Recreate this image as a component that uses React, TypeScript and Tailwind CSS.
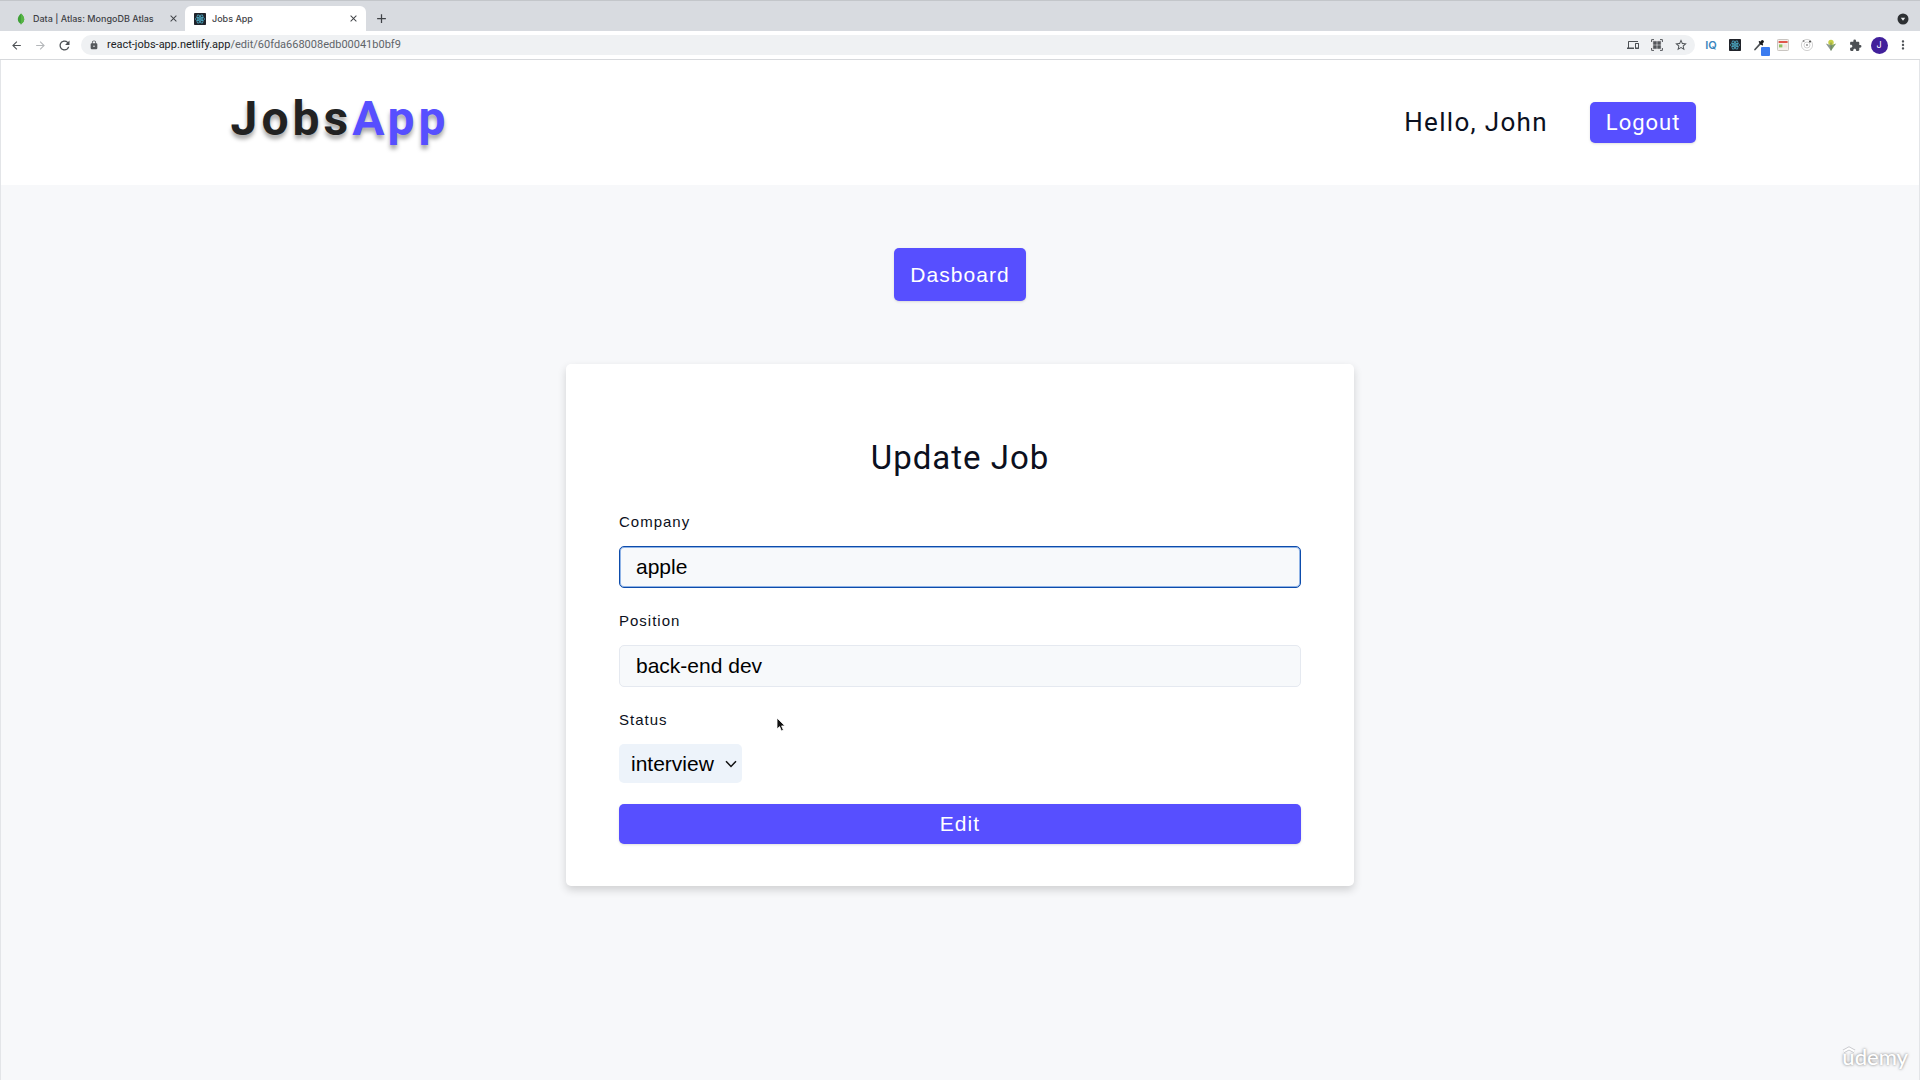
import { useState } from "react";
import {
  MdAdd,
  MdArrowBack,
  MdArrowForward,
  MdClose,
  MdExtension,
  MdLock,
  MdMoreVert,
  MdOutlineDevices,
  MdRefresh,
  MdStarBorder,
} from "react-icons/md";

const toolCell = "flex w-6 h-6 items-center justify-center";

function ReactBadge() {
  return (
    <svg viewBox="0 0 24 24" className="size-3 shrink-0" aria-hidden="true">
      <rect width="24" height="24" rx="1.5" fill="#20232a" />
      <g fill="none" stroke="#4fb3cf" strokeWidth="1.4">
        <ellipse cx="12" cy="12" rx="9.5" ry="3.7" />
        <ellipse cx="12" cy="12" rx="9.5" ry="3.7" transform="rotate(60 12 12)" />
        <ellipse cx="12" cy="12" rx="9.5" ry="3.7" transform="rotate(120 12 12)" />
      </g>
      <circle cx="12" cy="12" r="2" fill="#4fb3cf" />
    </svg>
  );
}

function MongoLeaf() {
  return (
    <svg viewBox="0 0 12 12" className="size-3 shrink-0" aria-hidden="true">
      <path d="M6 .4C8.3 2.6 9.2 4.4 9.2 6.2 9.2 8.4 7.9 9.9 6.3 10.8L6.2 11.8H5.8L5.7 10.8C4.1 9.9 2.8 8.4 2.8 6.2 2.8 4.4 3.7 2.6 6 .4Z" fill="#3fa037" />
      <path d="M6 .4C8.3 2.6 9.2 4.4 9.2 6.2 9.2 8.4 7.9 9.9 6.3 10.8L6 10.9Z" fill="#56b544" />
    </svg>
  );
}

function TabStrip() {
  return (
    <div className="flex h-[31px] items-end border-t border-[#c3c6ca] bg-[#d8dbe0] text-[9px] font-medium text-[#3f4246]">
      <div className="flex h-[25px] w-[185px] items-center gap-1.5 pl-[15px] pr-1.5">
        <MongoLeaf />
        <span className="flex-1 whitespace-nowrap">Data | Atlas: MongoDB Atlas</span>
        <button aria-label="Close Data tab">
          <MdClose size={11} />
        </button>
      </div>
      <div className="flex h-[25px] w-[181px] items-center gap-1.5 rounded-t-md bg-white pl-[9px] pr-[7px]">
        <ReactBadge />
        <span className="flex-1">Jobs App</span>
        <button aria-label="Close Jobs App tab">
          <MdClose size={11} />
        </button>
      </div>
      <button aria-label="New tab" className="flex h-[25px] w-[31px] items-center justify-center">
        <MdAdd size={15} />
      </button>
      <button aria-label="Search tabs" className="mb-1.5 ml-auto mr-[11px]">
        <svg viewBox="0 0 12 12" className="size-3" aria-hidden="true">
          <circle cx="6" cy="6" r="5.5" fill="#2d3033" />
          <path d="M3.8 4.8h4.4L6 7.8Z" fill="#e8eaed" />
        </svg>
      </button>
    </div>
  );
}

function Toolbar() {
  return (
    <div className="flex h-[29px] items-center border-b border-[#d7d9dc] bg-white pl-1 pr-[5px] text-[#4d5155]">
      <button aria-label="Back" className={toolCell}>
        <MdArrowBack size={13} />
      </button>
      <button aria-label="Forward" className={toolCell + " text-[#b4b7ba]"}>
        <MdArrowForward size={13} />
      </button>
      <button aria-label="Reload" className={toolCell}>
        <MdRefresh size={15} />
      </button>
      <div className="ml-[5px] mr-1 flex h-5 flex-1 items-center rounded-full bg-[#eff1f3] pl-2 pr-0.5">
        <MdLock size={10} className="mr-2 text-[#55585c]" />
        <span className="flex-1 font-[Roboto,sans-serif] text-[11px] text-[#606469]">
          <span className="text-[#202124]">react-jobs-app.netlify.app</span>
          /edit/60fda668008edb00041b0bf9
        </span>
        <button aria-label="Send to devices" className={toolCell}>
          <MdOutlineDevices size={12} />
        </button>
        <button aria-label="QR code" className={toolCell}>
          <svg viewBox="0 0 12 12" className="size-3" aria-hidden="true">
            <path d="M.6 3V.6H3M9 .6h2.4V3M11.4 9v2.4H9M3 11.4H.6V9" fill="none" stroke="#55585c" />
            <path d="M2.4 2.4h3v3h-3zM6.6 2.4h3v3h-3zM2.4 6.6h3v3h-3zM6.6 6.6h3v3h-3z" fill="#55585c" stroke="#55585c" strokeWidth=".6" />
          </svg>
        </button>
        <button aria-label="Bookmark this page" className={toolCell}>
          <MdStarBorder size={14} />
        </button>
      </div>
      <button className={toolCell + " text-[11px] font-semibold text-[#3b86bd]"}>IQ</button>
      <button aria-label="React tools" className={toolCell}>
        <ReactBadge />
      </button>
      <button aria-label="Colour picker" className={toolCell}>
        <svg viewBox="0 0 24 24" className="size-6" aria-hidden="true">
          <path d="M8 16.5 13.6 10.4" stroke="#4e5255" strokeWidth="1.7" strokeLinecap="round" />
          <path d="M12.4 8.8l3 3" stroke="#16181a" strokeWidth="1.4" strokeLinecap="round" />
          <path d="M14 10.2 15.4 8.6" stroke="#16181a" strokeWidth="3" strokeLinecap="round" />
          <rect x="14" y="14" width="9" height="9" rx="1" fill="#3b7cf0" />
        </svg>
      </button>
      <button aria-label="Calendar" className={toolCell}>
        <svg viewBox="0 0 12 12" className="size-3" aria-hidden="true">
          <rect x=".5" y=".5" width="11" height="11" rx=".8" fill="#f4f1ec" stroke="#c9c5c1" />
          <path d="M1.6 2h9v2h-9z" fill="#e0564a" />
          <path d="M2 5.4h3.4v3H2z" fill="#8fc063" />
          <path d="M6.4 5.4h3.6v3H6.4z" fill="#f3e3dc" />
        </svg>
      </button>
      <button aria-label="Orbit" className={toolCell}>
        <svg viewBox="0 0 14 14" className="size-3.5" fill="none" aria-hidden="true">
          <circle cx="7" cy="7" r="5.6" stroke="#d2d2d2" />
          <circle cx="7" cy="7" r="3" stroke="#c6c6c6" strokeWidth=".8" />
          <circle cx="7" cy="7" r=".9" fill="#888" />
          <circle cx="3.6" cy="3" r="1" fill="#888" />
          <circle cx="10" cy="3.6" r="1.1" fill="#555" />
        </svg>
      </button>
      <button aria-label="Lightbulb" className={toolCell}>
        <svg viewBox="0 0 12 12" className="size-3" aria-hidden="true">
          <circle cx="6" cy="3.4" r="2.7" fill="#c6cf45" />
          <path d="M.8 4.4 6 6.2v5.6Z" fill="#8d9a92" />
          <path d="M11.2 4.4 6 6.2v5.6Z" fill="#7d9c6a" />
          <path d="M6 3.6v8" stroke="#5f7a58" strokeWidth=".7" />
        </svg>
      </button>
      <button aria-label="Extensions" className={toolCell}>
        <MdExtension size={13} />
      </button>
      <button aria-label="Profile" className={toolCell}>
        <span className="flex size-[17px] items-center justify-center rounded-full bg-[#41209b] text-[9px] text-white">J</span>
      </button>
      <button aria-label="Menu" className={toolCell}>
        <MdMoreVert size={14} />
      </button>
    </div>
  );
}

function Header() {
  return (
    <header className="bg-white">
      <div className="mx-auto flex h-[125px] w-[77%] items-center justify-between pl-[9px] pr-0.5">
        <h1 className="pb-2 text-5xl font-bold tracking-[4px] text-[#222] [text-shadow:0_4px_4px_rgba(0,0,0,0.35)]">
          Jobs<span className="text-[#574fff]">App</span>
        </h1>
        <div className="flex items-center gap-[42px]">
          <span className="text-[26px] tracking-wider text-[#0b1020]">Hello, John</span>
          <button className="h-[41px] rounded-[5px] bg-[#574fff] px-4 text-[22px] tracking-[1px] text-white shadow">
            Logout
          </button>
        </div>
      </div>
    </header>
  );
}

const labelStyle = "font-['Liberation_Sans',Arial,sans-serif] text-[15px] leading-5 tracking-[1px] text-[#0b1020]";
const inputStyle =
  "mt-3.5 mb-[23px] h-[42px] w-full rounded-[5px] border bg-[#f7f9fb] px-4 font-['Liberation_Sans',Arial,sans-serif] text-[21px] text-black outline-none";

function JobForm() {
  const [company, setCompany] = useState("apple");
  const [position, setPosition] = useState("back-end dev");
  const [status, setStatus] = useState("interview");

  return (
    <form
      onSubmit={(e) => e.preventDefault()}
      className="mt-[63px] flex w-full max-w-[788px] flex-col items-start rounded-[5px] bg-white px-[53px] pb-[42px] pt-[74px] shadow-[0_4px_8px_rgba(0,0,0,0.16)]"
    >
      <h2 className="mb-[34px] self-center text-[33px] leading-10 tracking-[1px] text-[#0b1020]">Update Job</h2>
      <label htmlFor="company" className={labelStyle}>Company</label>
      <input
        id="company"
        value={company}
        onChange={(e) => setCompany(e.target.value)}
        className={inputStyle + " border-[#0d4cab] ring-1 ring-inset ring-[#8fb3e6]"}
      />
      <label htmlFor="position" className={labelStyle}>Position</label>
      <input
        id="position"
        value={position}
        onChange={(e) => setPosition(e.target.value)}
        className={inputStyle + " border-[#e5e9f0]"}
      />
      <label htmlFor="status" className={labelStyle}>Status</label>
      <div className="relative mt-3.5">
        <select
          id="status"
          value={status}
          onChange={(e) => setStatus(e.target.value)}
          className="h-[39px] w-[123px] appearance-none rounded-[5px] bg-[#edf3fa] pl-3 font-['Liberation_Sans',Arial,sans-serif] text-[21px] text-black outline-none"
        >
          <option>interview</option>
          <option>declined</option>
          <option>pending</option>
        </select>
        <svg viewBox="0 0 12 8" className="pointer-events-none absolute right-[5px] top-4 h-2 w-3" fill="none" aria-hidden="true">
          <path d="M1 1.2 6 6.4l5-5.2" stroke="#111" strokeWidth="1.5" />
        </svg>
      </div>
      <button
        type="submit"
        className="mt-[21px] h-10 w-full rounded-[5px] bg-[#574fff] font-['Liberation_Sans',Arial,sans-serif] text-[21px] tracking-wider text-white shadow"
      >
        Edit
      </button>
    </form>
  );
}

function Cursor() {
  return (
    <svg viewBox="0 0 10 16" className="absolute left-[776px] top-[717px] h-4 w-2.5" aria-hidden="true">
      <path d="M1 1v11l2.6-2.4L5.4 14l2-.9-1.8-4.2H9Z" fill="#111" stroke="#fff" strokeWidth=".8" />
    </svg>
  );
}

function Watermark() {
  return (
    <div className="absolute bottom-[9px] right-[12px] font-[Lato,sans-serif] text-[22px] font-medium leading-7 text-white [text-shadow:0_0_3px_rgba(0,0,0,0.55)]">
      <svg viewBox="0 0 14 8" className="absolute left-0 top-[3px] h-2 w-3.5" fill="none" aria-hidden="true">
        <path d="M1.5 5.4 7 2.4l5.5 3" stroke="#8d9196" strokeWidth="3.6" opacity=".45" />
        <path d="M1.5 5.4 7 2.4l5.5 3" stroke="#fff" strokeWidth="2" />
      </svg>
      udemy
    </div>
  );
}

export default function App() {
  return (
    <div className="relative flex min-h-screen flex-col bg-[#f7f8fa] font-[Roboto,sans-serif]">
      <div className="font-[Inter,sans-serif]">
        <TabStrip />
        <Toolbar />
      </div>
      <div className="flex flex-1 flex-col border-x border-[#e3e5e8]">
        <Header />
        <main className="flex flex-1 flex-col items-center px-6 pt-[63px]">
          <a
            href="#dashboard"
            className="flex h-[53px] items-center rounded-[5px] bg-[#574fff] px-4 font-['Liberation_Sans',Arial,sans-serif] text-[21px] tracking-wider text-white shadow"
          >
            Dasboard
          </a>
          <JobForm />
        </main>
      </div>
      <Cursor />
      <Watermark />
    </div>
  );
}
